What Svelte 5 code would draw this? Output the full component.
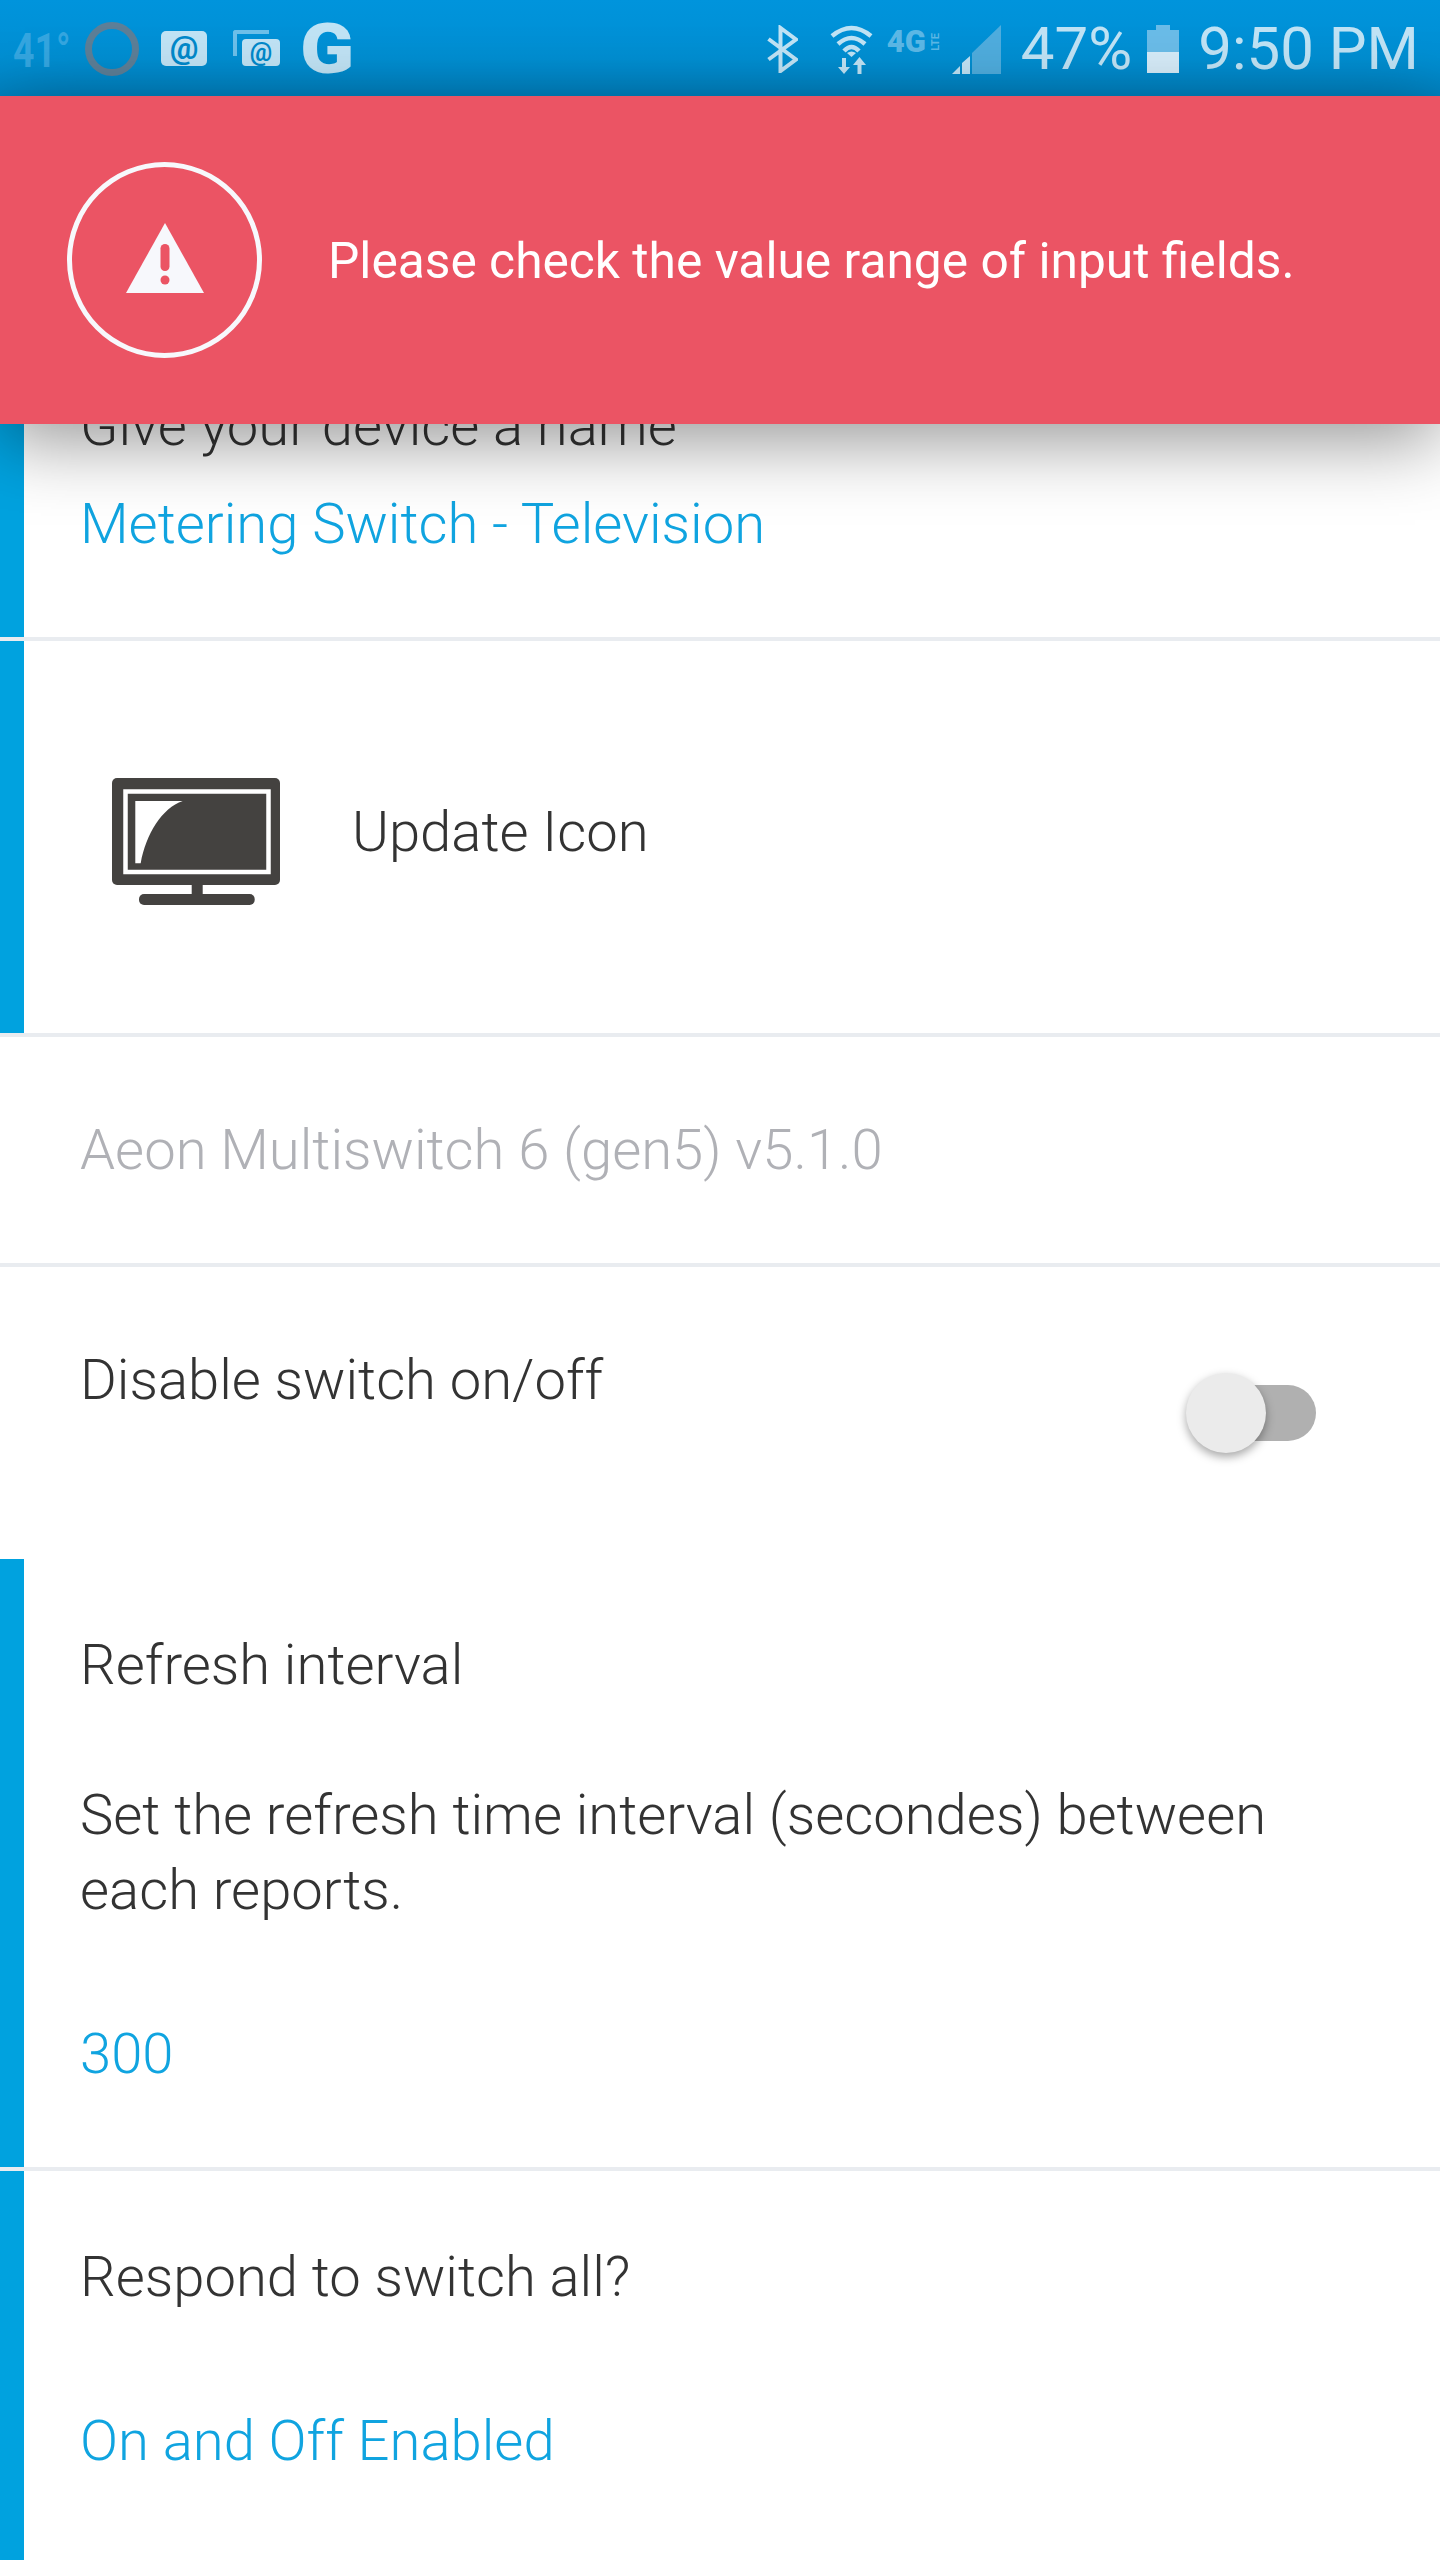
<script>
  const rows = {
    name: { label: 'Give your device a name', value: 'Metering Switch - Television' },
    refresh: {
      label: 'Refresh interval',
      desc: 'Set the refresh time interval (secondes) between each reports.',
      value: '300'
    },
    respond: { label: 'Respond to switch all?', value: 'On and Off Enabled' }
  };
</script>

<div class="screen">
  <div class="status-bar">
    <div class="status-left">
      <span class="temp"><span>41°</span></span>
      <span class="ring"></span>
      <span class="at-badge"><span>@</span></span>
      <span class="at-stack"><span class="at-back"></span><span class="at-front">@</span></span>
      <span class="g-logo"><span>G</span></span>
    </div>
    <div class="status-right">
      <svg class="bt" width="31" height="48" viewBox="0 0 31 48">
        <path d="M1.5 14 L29 34.5 L13.5 46 V3 L29 14.5 L1.5 34.5" fill="none" stroke="#c0e3f5" stroke-width="4" />
      </svg>
      <svg class="wifi" width="43" height="49" viewBox="0 0 43 49">
        <path d="M2 11 Q21.5 -5 41 11 M8 19 Q21.5 7 35 19 M14 26 Q21.5 18 29 26" fill="none" stroke="#c0e3f5" stroke-width="4.5" />
        <path d="M21.5 32 L17 28 Q21.5 25 26 28 Z" fill="#c0e3f5" />
        <path d="M12 33 H16 V42 H20 L14 49 L8 42 H12 Z M27.5 49 H31.5 V40 H36 L29.5 32 L23 40 H27.5 Z" fill="#c0e3f5" />
      </svg>
      <span class="net"><span class="net-g">4G</span><span class="net-lte">LTE</span></span>
      <svg class="signal" width="49" height="49" viewBox="0 0 49 49">
        <path d="M20 28 L49 0 V49 H20 Z" fill="#4fadde" />
        <path d="M10 38 L18 31 V49 H10 Z M0 49 L8 41 V49 Z" fill="#c0e3f5" />
      </svg>
      <span class="batt-pct">47%</span>
      <span class="battery"><span class="battery-cap"></span><span class="battery-empty"></span><span class="battery-fill"></span></span>
      <span class="clock">9:50 PM</span>
    </div>
  </div>

  <div class="alert">
    <div class="alert-circle">
      <svg width="78" height="70" viewBox="0 0 78 70">
        <path d="M39 0 L78 70 H0 Z" fill="#f7f8fc" />
        <rect x="34.5" y="21" width="9" height="27" rx="4.5" fill="#eb5464" />
        <circle cx="39" cy="57" r="4.5" fill="#eb5464" />
      </svg>
    </div>
    <div class="alert-text">Please check the value range of input fields.</div>
  </div>

  <div class="list">
    <div class="row row-name marked">
      <div class="label">{rows.name.label}</div>
      <div class="value">{rows.name.value}</div>
    </div>
    <div class="row row-icon marked">
      <svg class="tv" width="168" height="127" viewBox="0 0 168 127">
        <rect width="168" height="107" rx="5" fill="#444240" />
        <rect x="13.5" y="13.5" width="143" height="80.5" fill="none" stroke="#fff" stroke-width="4.5" />
        <path d="M23.3 23 H70.7 C50 30 34 56 28.7 85.3 H23.3 Z" fill="#fff" />
        <rect x="79.7" y="107" width="11" height="9" fill="#444240" />
        <rect x="27" y="116" width="115.7" height="11" rx="5" fill="#444240" />
      </svg>
      <div class="label">Update Icon</div>
    </div>
    <div class="row row-version">Aeon Multiswitch 6 (gen5) v5.1.0</div>
    <div class="row row-toggle">
      <div class="label">Disable switch on/off</div>
      <div class="toggle"><span class="track"></span><span class="knob"></span></div>
    </div>
    <div class="row row-refresh marked">
      <div class="label">{rows.refresh.label}</div>
      <div class="desc">{rows.refresh.desc}</div>
      <div class="value">{rows.refresh.value}</div>
    </div>
    <div class="row row-respond marked">
      <div class="label">{rows.respond.label}</div>
      <div class="value">{rows.respond.value}</div>
    </div>
  </div>
</div>

<style>
  :global(body) {
    margin: 0;
    background: #fff;
  }

  .screen {
    width: 1440px;
    height: 2560px;
    overflow: hidden;
    font-family: Roboto, "Liberation Sans", sans-serif;
    font-weight: 300;
    color: #333;
    position: relative;
  }

  .status-bar {
    height: 96px;
    background: linear-gradient(#0094dc, #008fd3 60%, #0083c2);
    display: flex;
    justify-content: space-between;
    align-items: center;
    padding: 0 21px 0 13px;
    box-sizing: border-box;
  }

  .status-left,
  .status-right {
    display: flex;
    align-items: center;
  }

  .temp {
    width: 55px;
    color: #35a6e0;
    font-size: 48px;
    font-weight: 700;
    line-height: 48px;
    margin-top: 6px;
    white-space: nowrap;
  }

  .temp span {
    display: inline-block;
    transform: scaleX(0.78);
    transform-origin: left center;
  }

  .ring {
    width: 54px;
    height: 54px;
    box-sizing: border-box;
    border: 7px solid #5d7f97;
    border-radius: 50%;
    margin: 2px 22px 0 17px;
  }

  .at-badge {
    width: 46px;
    height: 35px;
    background: #c0e3f5;
    border-radius: 5px;
    color: #0089cb;
    font-size: 32px;
    font-weight: 700;
    display: flex;
    align-items: center;
    justify-content: center;
    margin-right: 26px;
  }

  .at-stack {
    position: relative;
    width: 47px;
    height: 36px;
    margin-right: 20px;
  }

  .at-back {
    position: absolute;
    left: 0;
    top: 0;
    width: 32px;
    height: 22px;
    border: solid #6dc0ea;
    border-width: 4px 0 0 4px;
    border-top-left-radius: 3px;
  }

  .at-front {
    position: absolute;
    right: 0;
    bottom: 0;
    width: 38px;
    height: 27px;
    background: #c0e3f5;
    border-radius: 4px;
    color: #0089cb;
    font-size: 25px;
    font-weight: 700;
    line-height: 27px;
    text-align: center;
  }

  .g-logo {
    color: #c0e3f5;
    font-size: 71px;
    font-weight: 900;
    line-height: 52px;
    margin-top: 2px;
  }

  .g-logo span {
    display: inline-block;
    transform: scaleX(1.12);
    transform-origin: left center;
  }

  .status-right {
    color: #c0e3f5;
  }

  .bt {
    margin-top: 2px;
  }

  .wifi {
    margin: 2px 14px 0 32px;
  }

  .net {
    display: flex;
    align-items: center;
    color: #5cb8e6;
    margin: -12px 10px 0 0;
  }

  .net-g {
    font-size: 31px;
    font-weight: 900;
    line-height: 24px;
  }

  .net-lte {
    writing-mode: vertical-rl;
    transform: rotate(180deg);
    font-size: 11px;
    font-weight: 700;
    line-height: 12px;
    margin-left: 4px;
  }

  .signal {
    margin-top: 2px;
  }

  .batt-pct,
  .clock {
    font-size: 60px;
    font-weight: 400;
    line-height: 60px;
    margin-top: 1px;
    white-space: nowrap;
  }

  .batt-pct {
    margin-left: 20px;
  }

  .battery {
    width: 32px;
    height: 48px;
    display: flex;
    flex-direction: column;
    align-items: center;
    margin: 2px 19px 0 15px;
  }

  .battery-cap {
    width: 14px;
    height: 5px;
    background: #6abce8;
  }

  .battery-empty {
    width: 100%;
    height: 22px;
    background: #6abce8;
  }

  .battery-fill {
    width: 100%;
    flex: 1;
    background: #d6ecf9;
  }

  .alert {
    height: 328px;
    background: #eb5464;
    color: #fff;
    display: flex;
    align-items: center;
    padding-left: 67px;
    box-shadow: 0 16px 70px rgba(0, 0, 0, 0.42);
    position: relative;
    z-index: 2;
  }

  .alert-circle {
    width: 195px;
    height: 196px;
    flex-shrink: 0;
    box-sizing: border-box;
    border: 5px solid #f7f8fc;
    border-radius: 50%;
    display: flex;
    align-items: center;
    justify-content: center;
    margin-right: 66px;
  }

  .alert-circle svg {
    margin-top: -4px;
  }

  .alert-text {
    font-size: 49.7px;
    font-weight: 400;
    margin-top: 2px;
  }

  .list {
    margin-top: -31px;
  }

  .row {
    box-sizing: border-box;
    padding-left: 80px;
    border-bottom: 4px solid #e9ecf0;
    font-size: 56.2px;
    position: relative;
  }

  .marked::before {
    content: "";
    position: absolute;
    left: 0;
    top: 0;
    bottom: 0;
    width: 24px;
    background: #00a2df;
  }

  .value {
    color: #10a4e0;
  }

  .row-name {
    height: 248px;
  }

  .row-name .value {
    margin-top: 32px;
  }

  .row-icon {
    height: 396px;
    display: flex;
    align-items: center;
    padding-left: 112px;
    gap: 72px;
  }

  .row-icon .tv {
    margin-top: 8px;
  }

  .row-icon .label {
    margin-bottom: 10px;
  }

  .row-version {
    height: 230px;
    color: #b0b1b6;
    padding-top: 80px;
  }

  .row-toggle {
    height: 292px;
    padding: 80px 124px 0 80px;
    display: flex;
    justify-content: space-between;
    border-bottom: 0;
  }

  .toggle {
    position: relative;
    width: 130px;
    height: 80px;
    margin-top: 26px;
  }

  .track {
    position: absolute;
    left: 20px;
    right: 0;
    top: 12px;
    height: 56px;
    border-radius: 28px;
    background: #b0b0b0;
  }

  .knob {
    position: absolute;
    left: 0;
    top: 0;
    width: 80px;
    height: 80px;
    border-radius: 50%;
    background: #ebebeb;
    box-shadow: 0 4px 10px rgba(0, 0, 0, 0.35);
  }

  .row-refresh {
    height: 612px;
    padding-top: 73px;
  }

  .desc {
    margin-top: 80px;
    line-height: 75px;
    padding-right: 120px;
  }

  .row-refresh .value {
    margin-top: 93px;
  }

  .row-respond {
    height: 400px;
    padding-top: 73px;
    border-bottom: 0;
  }

  .row-respond .value {
    margin-top: 98px;
  }
</style>
